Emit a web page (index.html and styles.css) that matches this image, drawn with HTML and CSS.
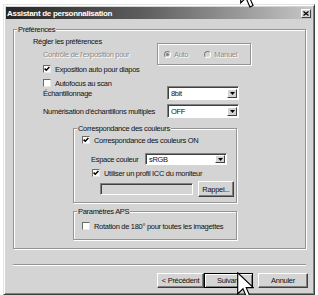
FILE: index.html
```html
<!DOCTYPE html>
<html lang="fr">
<head>
    <meta charset="UTF-8">
    <meta name="viewport" content="width=device-width, initial-scale=1.0">
    <title>Assistant de personnalisation</title>
    <link rel="stylesheet" href="styles.css">
</head>
<body>
<!-- Pointer peeking in from the top -->
<svg class="cursor cursor-top" width="17" height="27" viewBox="0 0 12 19">
    <path d="M0.5 0.5 L0.5 15.5 L4.2 11.8 L7 18.3 L9.2 17.3 L6.5 11 L11.5 11 Z" fill="#fff" stroke="#000" stroke-width="0.8"/>
</svg>

<div class="dialog">
    <div class="title-bar">
        <span class="title-text">Assistant de personnalisation</span>
        <span class="close-btn">
            <svg width="6" height="5" viewBox="0 0 6 5"><path d="M0.5 0.5 L5.5 4.5 M5.5 0.5 L0.5 4.5" stroke="#000" stroke-width="1.2"/></svg>
        </span>
    </div>

    <div class="dialog-body">
        <!-- Preferences group -->
        <div class="group group-main">
            <span class="group-label">Préférences</span>

            <div class="row row-heading">Régler les préférences</div>

            <div class="row row-expo">
                <span class="expo-label disabled">Contrôle de l'exposition pour</span>
                <div class="group radio-group">
                    <span class="radio radio-on"></span><span class="radio-text disabled">Auto</span>
                    <span class="radio radio-second"></span><span class="radio-text disabled">Manuel</span>
                </div>
            </div>

            <div class="row row-check">
                <span class="checkbox"><svg width="6" height="6" viewBox="0 0 6 6"><path d="M0.6 2.6 L2.3 4.3 L5.4 1.1" fill="none" stroke="#000" stroke-width="1.5"/></svg></span>
                <span>Exposition auto pour diapos</span>
            </div>
            <div class="row row-check row-autofocus">
                <span class="checkbox"></span>
                <span>Autofocus au scan</span>
            </div>

            <div class="row row-select row-sampling">
                <span class="select-label">Échantillonnage</span>
                <div class="select">
                    <span class="select-value">8bit</span>
                    <span class="select-arrow"><svg width="5" height="3" viewBox="0 0 5 3"><path d="M0 0 H5 L2.5 3 Z" fill="#000"/></svg></span>
                </div>
            </div>
            <div class="row row-select row-multi">
                <span class="select-label">Numérisation d'échantillons multiples</span>
                <div class="select">
                    <span class="select-value">OFF</span>
                    <span class="select-arrow"><svg width="5" height="3" viewBox="0 0 5 3"><path d="M0 0 H5 L2.5 3 Z" fill="#000"/></svg></span>
                </div>
            </div>

            <!-- Colour matching -->
            <div class="group group-color">
                <span class="group-label">Correspondance des couleurs</span>

                <div class="row row-check row-inner row-cm">
                    <span class="checkbox"><svg width="6" height="6" viewBox="0 0 6 6"><path d="M0.6 2.6 L2.3 4.3 L5.4 1.1" fill="none" stroke="#000" stroke-width="1.5"/></svg></span>
                    <span>Correspondance des couleurs ON</span>
                </div>

                <div class="row row-space">
                    <span class="space-label">Espace couleur</span>
                    <div class="select select-space">
                        <span class="select-value">sRGB</span>
                        <span class="select-arrow"><svg width="5" height="3" viewBox="0 0 5 3"><path d="M0 0 H5 L2.5 3 Z" fill="#000"/></svg></span>
                    </div>
                </div>

                <div class="row row-check row-icc">
                    <span class="checkbox"><svg width="6" height="6" viewBox="0 0 6 6"><path d="M0.6 2.6 L2.3 4.3 L5.4 1.1" fill="none" stroke="#000" stroke-width="1.5"/></svg></span>
                    <span>Utiliser un profil ICC du moniteur</span>
                </div>

                <div class="row row-profile">
                    <span class="text-field"></span>
                    <span class="btn btn-small">Rappel...</span>
                </div>
            </div>

            <!-- APS -->
            <div class="group group-aps">
                <span class="group-label">Paramètres APS</span>
                <div class="row row-check row-inner row-rotate">
                    <span class="checkbox"></span>
                    <span>Rotation de 180° pour toutes les imagettes</span>
                </div>
            </div>
        </div>

        <div class="separator"></div>

        <div class="button-row">
            <span class="btn btn-prev">&lt; Précédent</span>
            <span class="btn btn-next">Suivant</span>
            <span class="btn btn-cancel">Annuler</span>
        </div>
    </div>
</div>

<!-- Pointer over the Next button -->
<svg class="cursor cursor-bottom" width="17" height="27" viewBox="0 0 12 19">
    <path d="M0.5 0.5 L0.5 15.5 L4.2 11.8 L7 18.3 L9.2 17.3 L6.5 11 L11.5 11 Z" fill="#fff" stroke="#000" stroke-width="0.8"/>
</svg>
</body>
</html>
```

FILE: styles.css
```css
* {
    margin: 0;
    padding: 0;
    box-sizing: border-box;
}

body {
    position: relative;
    width: 318px;
    height: 295px;
    overflow: hidden;
    background: #fff;
    font-family: "Liberation Sans", Arial, sans-serif;
    font-size: 7.5px;
    letter-spacing: -0.3px;
    color: #111;
}

/* Window frame */
.dialog {
    margin: 4px 0 0 3px;
    width: 312px;
    height: 291px;
    padding: 2px;
    background: #d4d4d4;
    border: 1px solid;
    border-color: #e4e4e4 #404040 #404040 #e4e4e4;
    box-shadow: inset 1px 1px 0 #fff, inset -1px -1px 0 #808080;
    display: flex;
    flex-direction: column;
}

.title-bar {
    height: 12px;
    display: flex;
    align-items: center;
    justify-content: space-between;
    padding: 0 1px 0 1px;
    background: linear-gradient(to right, #262626 0%, #5e5e5e 45%, #c6c6c6 100%);
}

.title-text {
    color: #fff;
    font-weight: bold;
    font-size: 8px;
    letter-spacing: -0.3px;
}

.close-btn {
    width: 10px;
    height: 9px;
    display: flex;
    align-items: center;
    justify-content: center;
    background: #d4d4d4;
    border: 1px solid;
    border-color: #fff #404040 #404040 #fff;
}

/* Group boxes */
.group {
    position: relative;
    border: 1px solid #949494;
    box-shadow: inset 1px 1px 0 #fff, 1px 1px 0 #fff;
}

.group-label {
    position: absolute;
    top: -5px;
    left: 3px;
    padding: 0 1px;
    line-height: 9px;
    background: #d4d4d4;
    white-space: nowrap;
}

.group-main {
    margin: 10px 0 0 7px;
    width: 293px;
    height: 220px;
}

.row {
    display: flex;
    align-items: center;
    white-space: nowrap;
}

.row-heading {
    margin-top: 7px;
    height: 8px;
    padding-left: 19px;
}

.row-expo {
    margin-top: -2px;
    height: 22px;
    padding-left: 29px;
}

.expo-label {
    width: 114px;
}

.disabled {
    color: #8c8c8c;
    text-shadow: 1px 1px 0 #fff;
}

.radio-group {
    width: 94px;
    height: 22px;
    display: flex;
    align-items: center;
    padding-left: 6px;
}

.radio {
    width: 7px;
    height: 7px;
    border-radius: 50%;
    border: 1px solid;
    border-color: #808080 #fff #fff #808080;
    background: #d4d4d4;
    margin-right: 3px;
    display: flex;
    align-items: center;
    justify-content: center;
}

.radio-on::after {
    content: "";
    width: 3px;
    height: 3px;
    border-radius: 50%;
    background: #808080;
}

.radio-second {
    margin-left: 16px;
}

/* Checkboxes */
.row-check {
    height: 8px;
    padding-left: 29px;
}

.row-autofocus {
    margin-top: 6px;
}

.checkbox {
    width: 8px;
    height: 8px;
    margin-right: 4px;
    background: #fff;
    border: 1px solid;
    border-color: #6a6a6a #e8e8e8 #e8e8e8 #6a6a6a;
    display: flex;
    align-items: center;
    justify-content: center;
}

/* Drop-down lists */
.row-select {
    height: 14px;
    padding-left: 29px;
}

.row-sampling {
    margin-top: -1px;
}

.row-multi {
    margin-top: 4px;
}

.select-label {
    width: 124px;
}

.select {
    width: 72px;
    height: 14px;
    display: flex;
    align-items: center;
    background: #fff;
    border: 1px solid;
    border-color: #808080 #fff #fff #808080;
    box-shadow: inset 1px 1px 0 #404040;
    padding: 2px 1px 1px 2px;
}

.select-value {
    flex: 1;
    padding-left: 1px;
}

.select-arrow {
    width: 10px;
    height: 100%;
    display: flex;
    align-items: center;
    justify-content: center;
    background: #d4d4d4;
    border: 1px solid;
    border-color: #fff #404040 #404040 #fff;
}

/* Colour matching group */
.group-color {
    margin: 10px 0 0 59px;
    width: 164px;
    height: 75px;
}

.row-inner {
    padding-left: 8px;
}

.row-cm {
    margin-top: 7px;
}

.row-space {
    margin-top: 9px;
    height: 12px;
    padding-left: 17px;
}

.space-label {
    width: 54px;
}

.select-space {
    width: 82px;
    height: 12px;
    padding-top: 1px;
    padding-bottom: 1px;
}

.row-icc {
    margin-top: 4px;
    padding-left: 18px;
}

.row-profile {
    margin-top: 4px;
    height: 16px;
    padding-left: 26px;
}

.text-field {
    width: 93px;
    height: 12px;
    background: #d4d4d4;
    border: 1px solid;
    border-color: #808080 #fff #fff #808080;
    box-shadow: inset 1px 1px 0 #404040;
}

/* APS group */
.group-aps {
    margin: 8px 0 0 59px;
    width: 164px;
    height: 29px;
}

.row-rotate {
    margin-top: 10px;
}

/* Bottom of the dialog */
.separator {
    margin: 15px 0 0 7px;
    width: 293px;
    height: 2px;
    border-top: 1px solid #949494;
    border-bottom: 1px solid #fff;
}

.button-row {
    margin-top: 7px;
    display: flex;
    justify-content: flex-end;
    padding-right: 4px;
}

.btn {
    height: 15px;
    display: flex;
    align-items: center;
    justify-content: center;
    white-space: nowrap;
    background: #d4d4d4;
    border: 1px solid;
    border-color: #fff #404040 #404040 #fff;
    box-shadow: inset -1px -1px 0 #808080;
}

.btn-small {
    margin-left: 5px;
    width: 36px;
    height: 16px;
}

.btn-prev {
    width: 47px;
}

.btn-next {
    width: 49px;
    border-color: #000;
    box-shadow: inset 1px 1px 0 #fff, inset -1px -1px 0 #808080;
}

.btn-cancel {
    width: 50px;
    margin-left: 5px;
}

/* Mouse pointers laid over the dialog */
.cursor {
    position: absolute;
}

.cursor-top {
    left: 240px;
    top: -19px;
}

.cursor-bottom {
    left: 237px;
    top: 272px;
}
```
